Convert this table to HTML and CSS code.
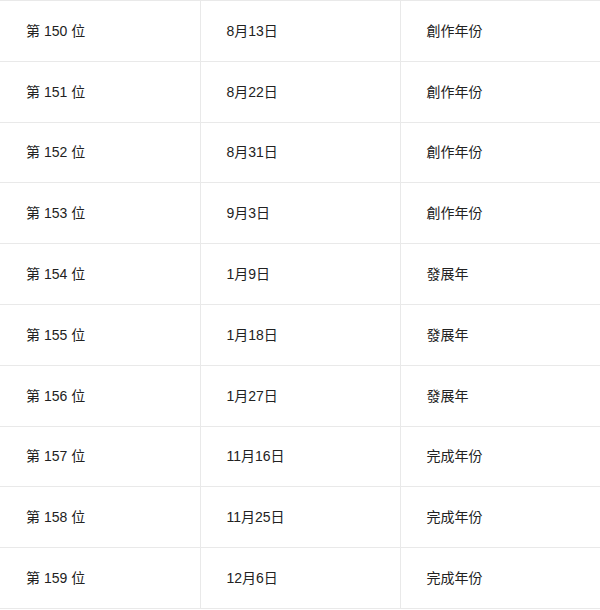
FILE: index.html
```html
<!DOCTYPE html>
<html lang="zh-Hant">
<head>
<meta charset="utf-8">
<link rel="stylesheet" href="styles.css">
</head>
<body>
<table class="rank-table">
  <tbody>
    <tr><td>第 150 位</td><td>8月13日</td><td>創作年份</td></tr>
    <tr><td>第 151 位</td><td>8月22日</td><td>創作年份</td></tr>
    <tr><td>第 152 位</td><td>8月31日</td><td>創作年份</td></tr>
    <tr><td>第 153 位</td><td>9月3日</td><td>創作年份</td></tr>
    <tr><td>第 154 位</td><td>1月9日</td><td>發展年</td></tr>
    <tr><td>第 155 位</td><td>1月18日</td><td>發展年</td></tr>
    <tr><td>第 156 位</td><td>1月27日</td><td>發展年</td></tr>
    <tr><td>第 157 位</td><td>11月16日</td><td>完成年份</td></tr>
    <tr><td>第 158 位</td><td>11月25日</td><td>完成年份</td></tr>
    <tr><td>第 159 位</td><td>12月6日</td><td>完成年份</td></tr>
  </tbody>
</table>
</body>
</html>
```

FILE: styles.css
```css
html, body {
  margin: 0;
  padding: 0;
  background: #ffffff;
}

.rank-table {
  width: 600px;
  border-collapse: collapse;
  table-layout: fixed;
  font-family: "Liberation Sans", "Noto Sans CJK TC", sans-serif;
  font-size: 14px;
  color: #222222;
}

.rank-table td {
  width: 200px;
  height: 60.8px;
  box-sizing: border-box;
  padding: 0 0 0 26px;
  border: 1px solid #e9e9e9;
  vertical-align: middle;
  line-height: 20px;
}

.rank-table td:first-child {
  border-left: none;
}
```
